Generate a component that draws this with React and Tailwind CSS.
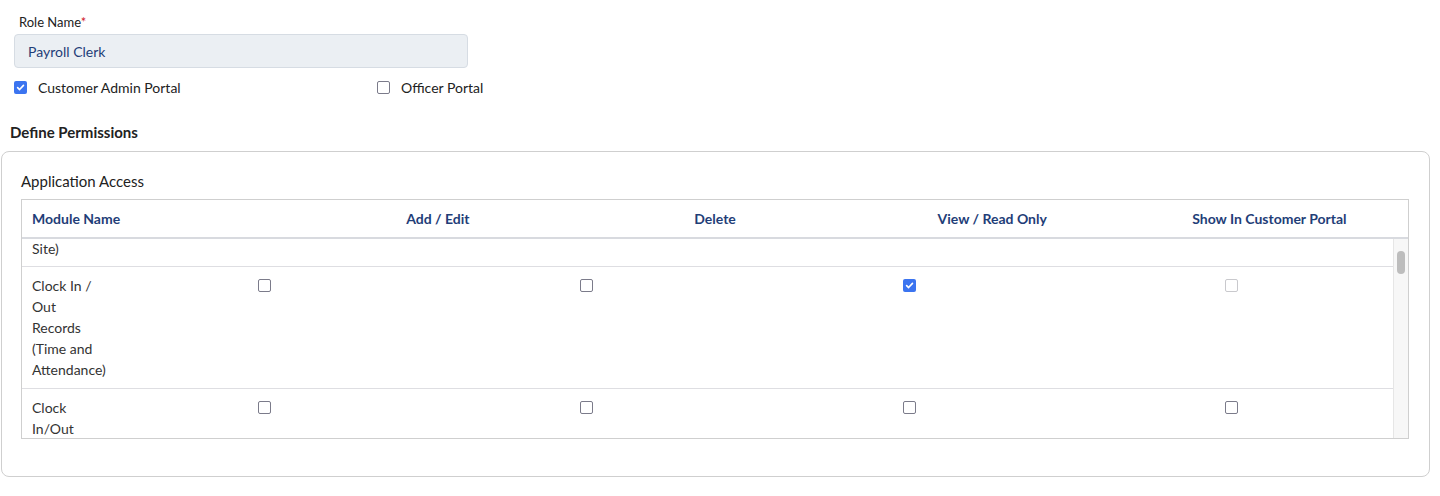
import React from "react";

const headers = ["Add / Edit", "Delete", "View / Read Only", "Show In Customer Portal"];

const rows = [
  { name: "Site)", partial: true },
  { name: "Clock In / Out Records (Time and Attendance)", checks: [false, false, true, "disabled"] },
  { name: "Clock In/Out", checks: [false, false, false, false] },
];

const Check = ({ checked, disabled }) =>
  checked ? (
    <span className="flex h-[13px] w-[13px] shrink-0 items-center justify-center rounded-[2px] bg-[#3b74f0]">
      <svg width="9" height="9" viewBox="0 0 10 10" fill="none">
        <path d="M1.8 5.2 4 7.3 8.3 2.6" stroke="white" strokeWidth="1.8" strokeLinecap="round" strokeLinejoin="round" />
      </svg>
    </span>
  ) : (
    <span
      className={
        disabled
          ? "block h-[13px] w-[13px] shrink-0 rounded-[2px] border-[1.5px] border-[#c9c9cd] bg-white"
          : "block h-[13px] w-[13px] shrink-0 rounded-[2px] border-[1.5px] border-[#7b7b8a] bg-white"
      }
    />
  );

const App = () => {
  return (
    <div className="h-[496px] w-full bg-white font-['Lato','Open_Sans',sans-serif] text-[#333]">
      {/* Role name */}
      <div className="pl-[14px] pt-[14px]">
        <label className="ml-[5px] block text-[13px] leading-[16px] text-[#222]">
          Role Name<span className="text-[#d0202a]">*</span>
        </label>
        <div className="mt-[4px] flex h-[34px] w-[454px] items-center rounded-[4px] border border-[#d6dce3] bg-[#ebeff3] px-[13px] text-[14px] text-[#1f3e78]">
          Payroll Clerk
        </div>
        <div className="mt-[9px] flex items-center text-[14px] text-[#222]">
          <label className="flex w-[363px] items-center gap-[11px]">
            <Check checked />
            Customer Admin Portal
          </label>
          <label className="flex items-center gap-[11px]">
            <Check />
            Officer Portal
          </label>
        </div>
      </div>

      <h3 className="ml-[10px] mt-[24px] text-[15px] font-bold leading-[20px] text-[#222]">
        Define Permissions
      </h3>

      {/* Permissions card */}
      <div className="ml-[1px] mt-[9px] h-[326px] w-[1429px] rounded-[8px] border border-[#cfcfcf] px-[19px] pt-[19px]">
        <div className="text-[15px] leading-[20px] text-[#222]">Application Access</div>
        <div className="mt-[8px] w-[1388px] border border-[#cfcfcf]">
          {/* Header */}
          <div className="grid h-[39px] grid-cols-5 items-center border-b-2 border-[#d8dadf] text-[14px] font-bold text-[#1f3e78]">
            <div className="pl-[10px]">Module Name</div>
            {headers.map((h) => (
              <div key={h} className="text-center">
                {h}
              </div>
            ))}
          </div>

          {/* Body */}
          <div className="flex h-[199px] overflow-hidden">
            <div className="flex-1">
              {rows.map((r, i) =>
                r.partial ? (
                  <div key={i} className="h-[28px] border-b border-[#dedee2] pl-[10px] text-[14px] leading-[20px]">
                    {r.name}
                  </div>
                ) : (
                  <div
                    key={i}
                    className="grid grid-cols-[81px_repeat(4,minmax(0,1fr))] border-b border-[#dedee2] pb-[8px] pt-[8px] text-[14px] leading-[21px]"
                  >
                    <div className="w-[81px] pl-[10px] pr-[1px] whitespace-normal">{r.name}</div>
                    {r.checks.map((c, j) => (
                      <div key={j} className="flex h-[21px] items-center justify-center">
                        <Check checked={c === true} disabled={c === "disabled"} />
                      </div>
                    ))}
                  </div>
                )
              )}
            </div>
            <div className="flex w-[15px] flex-col items-center border-l border-[#e6e6e6] bg-[#f7f7f7] pt-[12px]">
              <div className="h-[23px] w-[8px] rounded-full bg-[#bdbdbd]" />
            </div>
          </div>
        </div>
      </div>
    </div>
  );
};

export default App;
